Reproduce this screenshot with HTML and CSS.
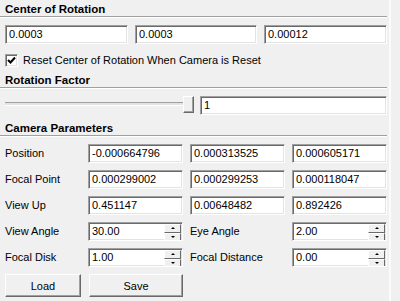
FILE: index.html
```html
<!DOCTYPE html>
<html lang="en">
<head>
  <meta charset="UTF-8">
  <title>Camera Properties</title>
  <link rel="stylesheet" href="styles.css">
</head>
<body>
  <div class="panel">
    <!-- Center of Rotation -->
    <div class="section-title">Center of Rotation</div>
    <div class="row3">
      <div class="field">0.0003</div>
      <div class="field">0.0003</div>
      <div class="field">0.00012</div>
    </div>
    <label class="check-row">
      <span class="checkbox">
        <svg width="9" height="9" viewBox="0 0 9 9"><path d="M1 4 L3.5 6.5 L8 1.5" fill="none" stroke="#000" stroke-width="2"/></svg>
      </span>
      Reset Center of Rotation When Camera is Reset
    </label>

    <!-- Rotation Factor -->
    <div class="section-title">Rotation Factor</div>
    <div class="slider-row">
      <div class="slider">
        <div class="groove"></div>
        <div class="handle"></div>
      </div>
      <div class="field">1</div>
    </div>

    <!-- Camera Parameters -->
    <div class="section-title">Camera Parameters</div>
    <div class="params">
      <div class="label">Position</div>
      <div class="field">-0.000664796</div>
      <div class="field">0.000313525</div>
      <div class="field">0.000605171</div>

      <div class="label">Focal Point</div>
      <div class="field">0.000299002</div>
      <div class="field">0.000299253</div>
      <div class="field">0.000118047</div>

      <div class="label">View Up</div>
      <div class="field">0.451147</div>
      <div class="field">0.00648482</div>
      <div class="field">0.892426</div>

      <div class="label">View Angle</div>
      <div class="field spin">30.00<span class="spin-btns"><span class="up"></span><span class="down"></span></span></div>
      <div class="label">Eye Angle</div>
      <div class="field spin">2.00<span class="spin-btns"><span class="up"></span><span class="down"></span></span></div>

      <div class="label">Focal Disk</div>
      <div class="field spin">1.00<span class="spin-btns"><span class="up"></span><span class="down"></span></span></div>
      <div class="label">Focal Distance</div>
      <div class="field spin">0.00<span class="spin-btns"><span class="up"></span><span class="down"></span></span></div>
    </div>

    <div class="buttons">
      <button class="btn btn-load">Load</button>
      <button class="btn btn-save">Save</button>
    </div>
  </div>
</body>
</html>
```
FILE: styles.css
```css
body {
  margin: 0;
  background: #f0f0f0;
  font-family: "Liberation Sans", Arial, sans-serif;
  font-size: 11px;
  color: #000;
}

.panel {
  width: 382px;
  height: 301px;
  padding: 0 2px 0 5px;
  border-right: 2px solid #fbfbfb;
}

/* Headings with etched line */
.section-title {
  margin-left: -5px;
  padding-left: 5px;
  font-weight: bold;
  font-size: 11.5px;
  line-height: 14px;
  height: 14px;
  border-bottom: 1px solid #a0a0a0;
  box-shadow: 0 1px 0 #fff;
}
.section-title:first-child {
  padding-top: 2px;
}

/* sunken line edit */
.field {
  position: relative;
  box-sizing: border-box;
  height: 19px;
  line-height: 17px;
  padding-left: 3px;
  background: #fff;
  border: 1px solid;
  border-color: #a0a0a0 #fff #fff #a0a0a0;
  box-shadow: inset 1px 1px 0 #696969, inset -1px -1px 0 #e3e3e3;
  white-space: nowrap;
  overflow: hidden;
}

.row3 {
  display: grid;
  grid-template-columns: 123px 122px 123px;
  column-gap: 7px;
  margin-top: 8px;
}

.check-row {
  display: flex;
  align-items: center;
  gap: 5px;
  height: 16px;
  margin-top: 8px;
  margin-bottom: 5px;
}
.checkbox {
  box-sizing: border-box;
  width: 13px;
  height: 13px;
  display: flex;
  align-items: center;
  justify-content: center;
  background: #fff;
  border: 1px solid;
  border-color: #a0a0a0 #fff #fff #a0a0a0;
  box-shadow: inset 1px 1px 0 #696969, inset -1px -1px 0 #e3e3e3;
}

/* Slider */
.slider-row {
  display: flex;
  gap: 6px;
  margin-top: 8px;
  height: 19px;
}
.slider {
  position: relative;
  width: 189px;
  flex: none;
}
.groove {
  position: absolute;
  left: 0;
  right: 10px;
  top: 6px;
  height: 2px;
  border-top: 1px solid #a0a0a0;
  border-bottom: 1px solid #fff;
  background: #e3e3e3;
}
.handle {
  position: absolute;
  right: 0;
  top: 0;
  box-sizing: border-box;
  width: 11px;
  height: 17px;
  background: #f0f0f0;
  border: 1px solid;
  border-color: #fff #696969 #696969 #fff;
  box-shadow: inset -1px -1px 0 #a0a0a0;
}
.slider-row .field {
  flex: 1;
}

.section-title + .params {
  margin-top: 8px;
}
.slider-row + .section-title {
  margin-top: 6px;
}

/* Camera parameters */
.params {
  display: grid;
  grid-template-columns: 76px 95px 95px 95px;
  column-gap: 7px;
  row-gap: 7px;
}
.label {
  line-height: 19px;
  white-space: nowrap;
}

.spin-btns {
  position: absolute;
  right: 1px;
  top: 1px;
  width: 17px;
  height: 17px;
  display: flex;
  flex-direction: column;
}
.spin-btns span {
  position: relative;
  flex: 1;
  background: #f0f0f0;
  border-top: 1px solid #fff;
  border-left: 1px solid #fff;
  border-right: 1px solid #696969;
  border-bottom: 1px solid #696969;
  box-sizing: border-box;
}
.spin-btns span::after {
  content: "";
  position: absolute;
  left: 6px;
  top: 2px;
  border-left: 2px solid transparent;
  border-right: 2px solid transparent;
}
.spin-btns .up::after {
  border-bottom: 2px solid #000;
}
.spin-btns .down::after {
  border-top: 2px solid #000;
}

/* Buttons */
.buttons {
  display: flex;
  gap: 8px;
  margin-top: 7px;
}
.btn {
  height: 23px;
  background: #f0f0f0;
  font-family: inherit;
  font-size: 11px;
  color: #000;
  border: 1px solid;
  border-color: #fff #696969 #696969 #fff;
  box-shadow: inset -1px -1px 0 #a0a0a0;
  padding: 0;
}
.btn-load {
  width: 76px;
}
.btn-save {
  width: 94px;
}
```
